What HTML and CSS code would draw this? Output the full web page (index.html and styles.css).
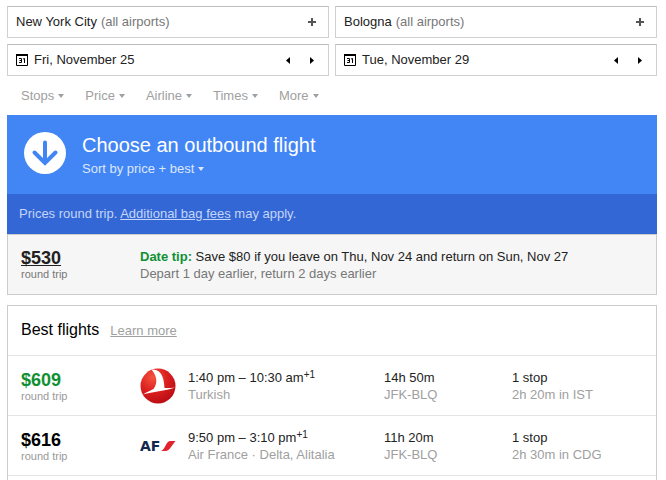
FILE: index.html
```html
<!DOCTYPE html>
<html lang="en">
<head>
<meta charset="utf-8">
<meta name="viewport" content="width=device-width, initial-scale=1">
<title>Flights: New York City to Bologna</title>
<link rel="stylesheet" href="styles.css">
</head>
<body>
<form class="search">
  <div class="field">
    <button type="button" class="place">New York City <span class="muted">(all airports)</span></button>
    <button type="button" class="icon-button" aria-label="Add origin">
      <svg width="8" height="8" viewBox="0 0 8 8"><path d="M4 0v8M0 4h8" stroke="#555" stroke-width="2"/></svg>
    </button>
  </div>
  <div class="field">
    <button type="button" class="place">Bologna <span class="muted">(all airports)</span></button>
    <button type="button" class="icon-button" aria-label="Add destination">
      <svg width="8" height="8" viewBox="0 0 8 8"><path d="M4 0v8M0 4h8" stroke="#555" stroke-width="2"/></svg>
    </button>
  </div>
  <div class="field">
    <button type="button" class="place date">
      <svg width="12" height="12" viewBox="0 0 12 12" fill="none" stroke="#000"><path d="M.5 1v10.500h11V1"/><path d="M0 1h12" stroke-width="2"/><path d="M3 4.500h2.500v4H3M3.500 6.500h2M7 5l1.500-.5v4.500"/></svg>
      Fri, November 25
    </button>
    <button type="button" class="icon-button" aria-label="Previous departure day">
      <svg width="8" height="8" viewBox="0 0 8 8"><path d="M6 1v7L2 4.500z"/></svg>
    </button>
    <button type="button" class="icon-button" aria-label="Next departure day">
      <svg width="8" height="8" viewBox="0 0 8 8"><path d="M2 1v7l4-3.500z"/></svg>
    </button>
  </div>
  <div class="field">
    <button type="button" class="place date">
      <svg width="12" height="12" viewBox="0 0 12 12" fill="none" stroke="#000"><path d="M.5 1v10.500h11V1"/><path d="M0 1h12" stroke-width="2"/><path d="M3 4.500h2.500v4H3M3.500 6.500h2M7 5l1.500-.5v4.500"/></svg>
      Tue, November 29
    </button>
    <button type="button" class="icon-button" aria-label="Previous return day">
      <svg width="8" height="8" viewBox="0 0 8 8"><path d="M6 1v7L2 4.500z"/></svg>
    </button>
    <button type="button" class="icon-button" aria-label="Next return day">
      <svg width="8" height="8" viewBox="0 0 8 8"><path d="M2 1v7l4-3.500z"/></svg>
    </button>
  </div>
</form>

<nav class="filters" aria-label="Filters">
  <button type="button" class="menu">Stops</button>
  <button type="button" class="menu">Price</button>
  <button type="button" class="menu">Airline</button>
  <button type="button" class="menu">Times</button>
  <button type="button" class="menu">More</button>
</nav>

<main class="content">
  <header class="banner">
    <svg width="42" height="42" viewBox="0 0 42 42" aria-hidden="true"><circle cx="21" cy="21" r="21" fill="#fff"/><path d="M21 10.500v20M10.500 20.500L21 31l10.500-10.500" fill="none" stroke="#4285f4" stroke-width="4" stroke-linecap="round"/></svg>
    <div>
      <h1 class="title">Choose an outbound flight</h1>
      <button type="button" class="menu sort">Sort by price + best</button>
    </div>
  </header>
  <p class="notice">Prices round trip. <a href="#fees">Additional bag fees</a> may apply.</p>

  <section class="tip">
    <div class="tip-price">
      <a class="price" href="#tip">$530</a>
      <span class="note">round trip</span>
    </div>
    <div>
      <p class="line"><b class="green">Date tip:</b> Save $80 if you leave on Thu, Nov 24 and return on Sun, Nov 27</p>
      <p class="line muted">Depart 1 day earlier, return 2 days earlier</p>
    </div>
  </section>

  <section class="results">
    <div class="results-head">
      <h2 class="subtitle">Best flights</h2>
      <a class="learn" href="#learn">Learn more</a>
    </div>
    <table class="flights">
      <colgroup><col class="col-price"><col class="col-logo"><col class="col-times"><col class="col-duration"><col></colgroup>
      <tbody>
        <tr>
          <td><span class="price green">$609</span><span class="note">round trip</span></td>
          <td>
            <svg class="logo" width="36" height="36" viewBox="0 0 36 36" role="img" aria-label="Turkish">
              <defs><radialGradient id="ball" cx=".35" cy=".25" r=".8"><stop offset="0" stop-color="#f4543f"/><stop offset=".5" stop-color="#dc2020"/><stop offset="1" stop-color="#b80d14"/></radialGradient></defs>
              <circle cx="18" cy="18" r="17.500" fill="url(#ball)"/>
              <path d="M11.500 1.500C19 1 24 6 24.500 20C28 20.300 31 20 35 19.500C25 23 13 23.500 3 26.500C7 24 10 22.500 13.500 21C18 15 17 8 11.500 1.500z" fill="#fff"/>
            </svg>
          </td>
          <td><div class="line">1:40 pm – 10:30 am<sup>+1</sup></div><div class="line faint">Turkish</div></td>
          <td><div class="line">14h 50m</div><div class="line faint">JFK-BLQ</div></td>
          <td><div class="line">1 stop</div><div class="line faint">2h 20m in IST</div></td>
        </tr>
        <tr>
          <td><span class="price">$616</span><span class="note">round trip</span></td>
          <td>
            <svg class="logo" width="36" height="36" viewBox="0 0 36 36" role="img" aria-label="Air France">
              <text class="logo-text" x="0" y="23">AF</text>
              <path d="M21 23C25 22 26 13 30 13h5.500l-6 8q-1.500 2-4 2z" fill="#e0232e"/>
            </svg>
          </td>
          <td><div class="line">9:50 pm – 3:10 pm<sup>+1</sup></div><div class="line faint">Air France · Delta, Alitalia</div></td>
          <td><div class="line">11h 20m</div><div class="line faint">JFK-BLQ</div></td>
          <td><div class="line">1 stop</div><div class="line faint">2h 30m in CDG</div></td>
        </tr>
      </tbody>
    </table>
  </section>
</main>
</body>
</html>
```
FILE: styles.css
```css
* { box-sizing: border-box; }

body {
  display: flex;
  flex-direction: column;
  min-height: 100vh;
  margin: 0;
  padding: 6px 9px 0 7px;
  background: #fff;
  color: #222;
  font: 13px/17px "Liberation Sans", Arial, sans-serif;
}

h1, h2, p { margin: 0; font-weight: normal; }

button {
  padding: 0;
  border: 0;
  background: none;
  color: inherit;
  font: inherit;
  cursor: pointer;
}

svg { display: block; }

.muted { color: #777; }
.faint { color: #a0a0a0; }
.green { color: #0f9032; }

.search {
  display: grid;
  grid-template-columns: 1fr 1fr;
  gap: 6px;
}

.field {
  display: flex;
  align-items: center;
  height: 32px;
  padding: 0 8px 1px;
  border: 1px solid #d0d0d0;
  border-top-color: #bdbdbd;
}

.place {
  display: flex;
  flex: 1;
  align-items: center;
  gap: 4px;
  text-align: left;
}

.date { gap: 6px; }

.icon-button {
  display: grid;
  place-items: center;
  width: 16px;
  height: 24px;
}

.icon-button + .icon-button { margin-left: 8px; }

.filters {
  display: flex;
  gap: 21px;
  padding: 11px 14px;
  color: #a0a0a0;
}

.menu {
  display: flex;
  align-items: center;
  gap: 4px;
}

.menu::after {
  content: "";
  border: 3px solid transparent;
  border-top: 4px solid currentColor;
  border-bottom: 0;
}

.content {
  display: flex;
  flex: 1;
  flex-direction: column;
}

.banner {
  display: flex;
  gap: 16px;
  padding: 17px;
  background: #4285f4;
  color: #fff;
}

.title { font-size: 20px; line-height: 26px; }

.sort { margin-top: 2px; color: #dbe7fd; }

.notice {
  padding: 11px 12px 12px;
  background: #3367d6;
  color: #c5d5f7;
}

.notice a { color: inherit; }

.tip {
  display: flex;
  padding: 13px 13px 12px;
  border: 1px solid #ccc;
  background: #f6f6f6;
}

.tip-price { width: 119px; }

.price {
  display: block;
  color: #000;
  font-size: 18px;
  font-weight: bold;
  line-height: 20px;
}

.price.green { color: #0f9032; }

.tip-price .price { width: max-content; color: #222; }

.note {
  display: block;
  color: #999;
  font-size: 11px;
  line-height: 12px;
}

.tip .note { color: #777; }

.results {
  flex: 1;
  margin-top: 10px;
  border: 1px solid #ccc;
  border-bottom: 0;
}

.results-head {
  display: flex;
  align-items: baseline;
  gap: 11px;
  padding: 12px 13px 14px;
}

.subtitle { color: #000; font-size: 16px; line-height: 23px; }

.learn { color: #a0a0a0; }

.flights {
  width: 100%;
  border-collapse: collapse;
  table-layout: fixed;
}

.flights tr { border-top: 1px solid #e5e5e5; }
.flights tr:last-child { border-bottom: 1px solid #e5e5e5; }

.flights td {
  height: 60px;
  padding: 0;
  vertical-align: middle;
}

.flights td:first-child { padding-left: 13px; }

.col-price { width: 132px; }
.col-logo { width: 48px; }
.col-times { width: 196px; }
.col-duration { width: 128px; }

sup {
  font-size: 10px;
  line-height: 0;
  vertical-align: 4px;
}

.logo-text {
  fill: #14284f;
  font: bold 14px "DejaVu Sans", sans-serif;
}
```
